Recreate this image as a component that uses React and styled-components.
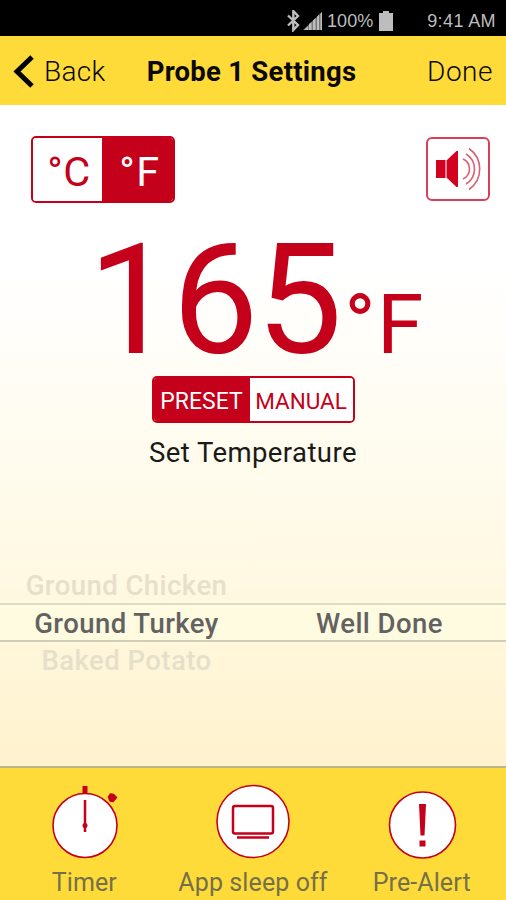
import React, { useState } from "react";
import styled, { createGlobalStyle } from "styled-components";

const red = "#c4001a";
const yellow = "#ffdb3a";

const GlobalStyle = createGlobalStyle`
  * {
    box-sizing: border-box;
  }
  body {
    margin: 0;
    font-family: Roboto, sans-serif;
  }
  button {
    padding: 0;
    border: 0;
    background: none;
    font-family: inherit;
    color: inherit;
  }
`;

const Screen = styled.div`
  display: flex;
  flex-direction: column;
  width: 506px;
  height: 900px;
  overflow: hidden;
  background: #fff;
`;

const StatusBar = styled.div`
  display: flex;
  align-items: center;
  justify-content: flex-end;
  flex: none;
  height: 36px;
  padding: 6px 10px 0 0;
  background: #000;
  color: #bdbdbd;
  font: 18px "Liberation Sans", sans-serif;
`;

const Battery = styled.span`
  display: flex;
  align-items: center;
  gap: 6px;
  margin: 0 34px 0 3px;
`;

const Clock = styled.span`
  letter-spacing: 0.4px;
`;

const Header = styled.header`
  display: grid;
  grid-template-columns: 130px 1fr 130px;
  align-items: center;
  flex: none;
  height: 69px;
  padding: 2px 13px 0 13px;
  background: ${yellow};
  color: #0b0900;
  font-size: 28px;
  line-height: 36px;
`;

const HeaderButton = styled.button`
  display: flex;
  align-items: center;
  justify-content: ${({ $end }) => ($end ? "flex-end" : "flex-start")};
  gap: 9px;
  font-size: 28px;
  line-height: 36px;
  font-weight: 300;
  letter-spacing: ${({ $end }) => ($end ? "0.5px" : "0.3px")};
`;

const Title = styled.h1`
  margin: 0 0 0 -3px;
  font-size: 27.5px;
  font-weight: 700;
  letter-spacing: 0.25px;
  text-align: center;
  white-space: nowrap;
`;

const Main = styled.main`
  display: flex;
  flex-direction: column;
  flex: none;
  height: 661px;
  padding-top: 31px;
  background: linear-gradient(#fff 0%, #fff 25%, #fff9e4 70%, #fff2cd 100%);
`;

const TopRow = styled.div`
  display: flex;
  justify-content: space-between;
  height: 67px;
  padding: 0 16px 0 31px;
`;

const Toggle = styled.div`
  display: flex;
  width: ${({ $width }) => $width}px;
  height: ${({ $height }) => $height}px;
  border: 2px solid ${red};
  border-radius: 5px;
  background: #fff;
  overflow: hidden;
`;

const Option = styled.button`
  flex: ${({ $width }) => ($width ? `0 0 ${$width}px` : 1)};
  padding-top: ${({ $drop }) => $drop}px;
  padding-left: ${({ $indent }) => $indent || 0}px;
  background: ${({ $active }) => ($active ? red : "#fff")};
  color: ${({ $active }) => ($active ? "#fff" : red)};
  font-size: ${({ $size }) => $size}px;
  line-height: 1;
  letter-spacing: ${({ $spacing }) => $spacing || 0}px;
  white-space: nowrap;
`;

const SoundButton = styled.button`
  width: 64px;
  height: 64px;
  margin-top: 1px;
  border: 2px solid #d8405a;
  border-radius: 6px;
  background: #fff;

  svg {
    display: block;
  }
`;

const Reading = styled.div`
  display: flex;
  align-items: baseline;
  height: 173px;
  padding: 24px 0 0 88px;
  color: ${red};
`;

const Degrees = styled.span`
  font-size: 154px;
  line-height: 148px;
  letter-spacing: -2.5px;
`;

const Unit = styled.span`
  margin-left: 4px;
  font-size: 84px;
  line-height: 84px;
  letter-spacing: 1.5px;
`;

const ModeRow = styled.div`
  display: flex;
  justify-content: center;
`;

const Caption = styled.p`
  margin: 12px 0 0;
  color: #1a1a18;
  font-size: 27.5px;
  line-height: 36px;
  letter-spacing: 0.42px;
  text-align: center;
`;

const Picker = styled.div`
  margin-top: 96px;
`;

const PickerRow = styled.div`
  display: grid;
  grid-template-columns: 253px 253px;
  align-items: center;
  height: ${({ $selected }) => ($selected ? 39 : 36)}px;
  padding-top: 2px;
  border-top: ${({ $selected }) => ($selected ? "2px solid #dedbc8" : 0)};
  border-bottom: ${({ $selected }) => ($selected ? "2px solid #cfccb8" : 0)};
  background: ${({ $selected }) => ($selected ? "#fffbe0" : "transparent")};
  color: ${({ $selected }) => ($selected ? "#626262" : "#e6e0cb")};
  font-size: 27.5px;
  font-weight: 500;
  line-height: 34px;
  letter-spacing: 0.45px;
  text-align: center;
`;

const Footer = styled.footer`
  display: grid;
  grid-template-columns: repeat(3, 1fr);
  flex: 1;
  border-top: 2px solid #b9b58c;
  background: ${yellow};
`;

const Tab = styled.button`
  display: flex;
  flex-direction: column;
  align-items: center;
  color: #74704a;

  svg {
    display: block;
    margin-top: 12px;
  }
`;

const TabLabel = styled.span`
  font-size: 25px;
  line-height: 32px;
  margin-top: 7px;
  letter-spacing: 0.1px;
  white-space: nowrap;
`;

const StatusIcons = () => (
  <svg width="38" height="22" viewBox="0 0 38 22">
    <path d="M2 5.500 12 15 7.300 20V1L12 6 2 15.500" fill="none" stroke="#bdbdbd" strokeWidth="2.400" />
    <path d="M17 20 36 2v18z" fill="#777" />
    <path d="M18 20l4-3.800V20zM23 20v-5.700l2.500-2.300V20zM27 20v-9.500l2.500-2.400V20zM31 20V6.700l2-1.900V20zM34.500 20V3.400L36 2v18z" fill="#bdbdbd" />
  </svg>
);

const BatteryIcon = () => (
  <svg width="14" height="20" viewBox="0 0 14 20">
    <path d="M4 0h6v2h4v18H0V2h4z" fill="#bdbdbd" />
  </svg>
);

const BackIcon = () => (
  <svg width="22" height="34" viewBox="0 0 22 34">
    <path d="M19 2 4 16.500l15 14.500" fill="none" stroke="#000" strokeWidth="5" />
  </svg>
);

const SoundIcon = () => (
  <svg width="60" height="60" viewBox="0 0 60 60">
    <path d="M8 21h9.500v18H8zM19 21l9.500-9H30v36h-1.500L19 39z" fill="#d4001f" />
    <path d="M17.500 21H19v18h-1.500z" fill="#ef8a98" />
    <g fill="none" stroke="#dc5f74" strokeWidth="1.600">
      <path d="M35 20a11 11 0 0 1 0 20" />
      <path d="M38 15a17.500 17.500 0 0 1 0 30" />
      <path d="M41 9.500a25 25 0 0 1 0 41" />
    </g>
  </svg>
);

const TimerIcon = () => (
  <svg width="80" height="80" viewBox="0 0 80 80">
    <circle cx="41" cy="45.500" r="32" fill="#fff" stroke={red} strokeWidth="1.600" />
    <path d="M38.500 6h5v7h-5z" fill={red} />
    <path d="M64.500 17 66.500 14l3 .5 3 3-3.500 4-3-.5z" fill={red} stroke={red} strokeWidth="1.500" strokeLinejoin="round" />
    <path d="M41 20v32" stroke={red} strokeWidth="2.500" />
    <circle cx="41" cy="45.500" r="2.500" fill={red} />
  </svg>
);

const SleepIcon = () => (
  <svg width="80" height="80" viewBox="0 0 80 80">
    <circle cx="40" cy="41.500" r="36" fill="#fff" stroke={red} strokeWidth="1.600" />
    <rect x="20" y="26" width="40" height="27.500" rx="2" fill="none" stroke={red} strokeWidth="2.500" />
    <path d="M24 57.500h32" stroke={red} strokeWidth="2.500" />
  </svg>
);

const AlertIcon = () => (
  <svg width="80" height="80" viewBox="0 0 80 80">
    <circle cx="40.500" cy="45" r="33" fill="#fff" stroke={red} strokeWidth="1.600" />
    <path d="M37 24h7l-1.500 31.500h-4zM37.500 60.500h6v6h-6z" fill={red} />
  </svg>
);

const foods = [
  { name: "Ground Chicken" },
  { name: "Ground Turkey", level: "Well Done", selected: true },
  { name: "Baked Potato" },
];

const tabs = [
  { label: "Timer", Icon: TimerIcon },
  { label: "App sleep off", Icon: SleepIcon },
  { label: "Pre-Alert", Icon: AlertIcon },
];

const App = () => {
  const [unit, setUnit] = useState("F");
  const [mode, setMode] = useState("preset");

  return (
    <Screen>
      <GlobalStyle />
      <StatusBar>
        <StatusIcons />
        <Battery>
          100%
          <BatteryIcon />
        </Battery>
        <Clock>9:41 AM</Clock>
      </StatusBar>

      <Header>
        <HeaderButton>
          <BackIcon />
          Back
        </HeaderButton>
        <Title>Probe 1 Settings</Title>
        <HeaderButton $end>Done</HeaderButton>
      </Header>

      <Main>
        <TopRow>
          <Toggle $width={144} $height={67}>
            <Option
              $size={41.5}
              $spacing={0.5}
              $drop={4}
              $indent={3}
              $width={69}
              $active={unit === "C"}
              onClick={() => setUnit("C")}
            >
              °C
            </Option>
            <Option
              $size={41.5}
              $spacing={1.5}
              $drop={4}
              $indent={5}
              $active={unit === "F"}
              onClick={() => setUnit("F")}
            >
              °F
            </Option>
          </Toggle>
          <SoundButton aria-label="Sound">
            <SoundIcon />
          </SoundButton>
        </TopRow>

        <Reading>
          <Degrees>165</Degrees>
          <Unit>°{unit}</Unit>
        </Reading>

        <ModeRow>
          <Toggle $width={203} $height={47}>
            <Option $size={23} $drop={3} $width={96} $active={mode === "preset"} onClick={() => setMode("preset")}>
              PRESET
            </Option>
            <Option $size={22.5} $drop={3} $active={mode === "manual"} onClick={() => setMode("manual")}>
              MANUAL
            </Option>
          </Toggle>
        </ModeRow>
        <Caption>Set Temperature</Caption>

        <Picker>
          {foods.map(({ name, level, selected }) => (
            <PickerRow key={name} $selected={selected}>
              <span>{name}</span>
              <span>{level}</span>
            </PickerRow>
          ))}
        </Picker>
      </Main>

      <Footer>
        {tabs.map(({ label, Icon }) => (
          <Tab key={label}>
            <Icon />
            <TabLabel>{label}</TabLabel>
          </Tab>
        ))}
      </Footer>
    </Screen>
  );
};

export default App;
